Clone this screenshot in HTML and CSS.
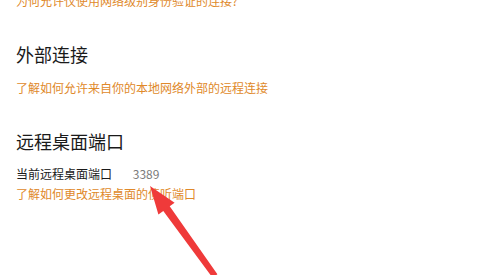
FILE: index.html
```html
<!DOCTYPE html>
<html>
<head>
    <title>远程桌面</title>
    <link rel="stylesheet" href="styles.css">
</head>

<body>
    <section class="block first">
        <a class="link" href="#">为何允许仅使用网络级别身份验证的连接?</a>
    </section>

    <section class="block">
        <h2>外部连接</h2>
        <a class="link" href="#">了解如何允许来自你的本地网络外部的远程连接</a>
    </section>

    <section class="block">
        <h2>远程桌面端口</h2>
        <div class="row">
            <span class="label">当前远程桌面端口</span>
            <span class="value">3389</span>
        </div>
        <a class="link tight" href="#">了解如何更改远程桌面的侦听端口</a>
    </section>

    <svg class="arrow" width="500" height="275" viewBox="0 0 500 275">
        <polygon points="150,186 174.6,202.8 169.7,206.3 217.4,274.2 212.6,277.8 163.3,211.1 158.4,214.6" fill="#ef3a3a"/>
    </svg>
</body>
</html>
```

FILE: styles.css
```css
body {
    font-family: "Noto Sans CJK SC", "Noto Sans", sans-serif;
    background-color: #fff;
    color: #1a1a1a;
    margin: 0;
    padding: 0 16px;
    height: 275px;
    overflow: hidden;
    position: relative;
}

.block {
    margin: 0;
}

.first {
    margin-top: -7px;
}

h2 {
    font-size: 18px;
    font-weight: normal;
    line-height: 24px;
    margin: 33px 0 0;
}

.link {
    display: block;
    font-size: 12px;
    line-height: 16px;
    color: #e0892a;
    text-decoration: none;
    margin-top: 14px;
}

.first .link {
    margin-top: 0;
}

.row {
    font-size: 12px;
    line-height: 20px;
    margin-top: 11px;
}

.value {
    color: #7a7a7a;
    margin-left: 18px;
}

.link.tight {
    line-height: 20px;
    margin-top: 0;
}

.arrow {
    position: absolute;
    left: 0;
    top: 0;
    pointer-events: none;
}
```
